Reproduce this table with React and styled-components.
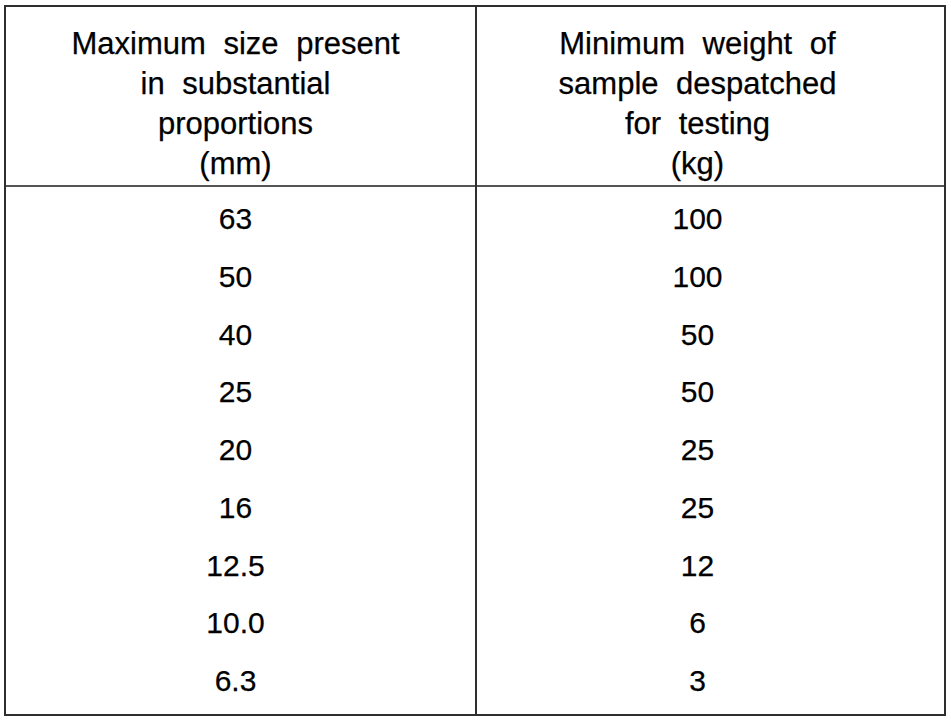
import React from 'react';
import styled, { createGlobalStyle } from 'styled-components';

const GlobalStyle = createGlobalStyle`
  body {
    margin: 0;
    background: #ffffff;
    font-family: "Liberation Sans", Arial, sans-serif;
    color: #000000;
  }
`;

const Page = styled.div`
  padding: 5px 0 0 4px;
`;

const Frame = styled.div`
  width: 942px;
  height: 711px;
  box-sizing: border-box;
  border: 2px solid #2e2e2e;
  display: flex;
`;

const Column = styled.div`
  display: flex;
  flex-direction: column;
  width: ${({ $width }) => $width};
  flex: ${({ $grow }) => ($grow ? 1 : 'none')};
  border-left: ${({ $divider }) => ($divider ? '2px solid #2e2e2e' : 'none')};
`;

const Head = styled.div`
  height: 180px;
  box-sizing: border-box;
  padding: 17px ${({ $shift }) => $shift}px 0 0;
  border-bottom: 2px solid #555555;
  text-align: center;
  font-size: 31px;
  line-height: 40px;
  word-spacing: 9px;
  -webkit-text-stroke: 0.25px #000;
`;

const Rows = styled.div`
  padding-top: 3px;
`;

const Cell = styled.div`
  height: 57.75px;
  line-height: 57.75px;
  padding-right: ${({ $shift }) => $shift}px;
  text-align: center;
  font-size: 30px;
  -webkit-text-stroke: 0.25px #000;
`;

const data = [
  ['63', '100'],
  ['50', '100'],
  ['40', '50'],
  ['25', '50'],
  ['20', '25'],
  ['16', '25'],
  ['12.5', '12'],
  ['10.0', '6'],
  ['6.3', '3'],
];

const App = () => {
  return (
    <Page>
      <GlobalStyle />
      <Frame>
        <Column $width="469px">
          <Head $shift={10}>
            Maximum size present<br />
            in substantial<br />
            proportions<br />
            (mm)
          </Head>
          <Rows>
            {data.map((row, i) => (
              <Cell key={i} $shift={10}>{row[0]}</Cell>
            ))}
          </Rows>
        </Column>
        <Column $grow $divider>
          <Head $shift={26}>
            Minimum weight of<br />
            sample despatched<br />
            for testing<br />
            (kg)
          </Head>
          <Rows>
            {data.map((row, i) => (
              <Cell key={i} $shift={26}>{row[1]}</Cell>
            ))}
          </Rows>
        </Column>
      </Frame>
    </Page>
  );
};

export default App;
